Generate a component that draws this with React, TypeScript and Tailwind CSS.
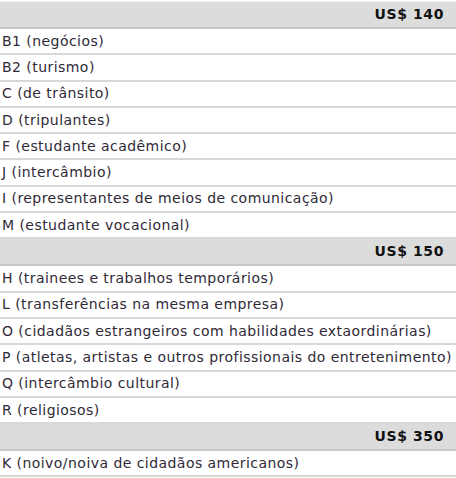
import React from "react";

const groups: { price: string; items: string[] }[] = [
  {
    price: "US$ 140",
    items: [
      "B1 (negócios)",
      "B2 (turismo)",
      "C (de trânsito)",
      "D (tripulantes)",
      "F (estudante acadêmico)",
      "J (intercâmbio)",
      "I (representantes de meios de comunicação)",
      "M (estudante vocacional)",
    ],
  },
  {
    price: "US$ 150",
    items: [
      "H (trainees e trabalhos temporários)",
      "L (transferências na mesma empresa)",
      "O (cidadãos estrangeiros com habilidades extaordinárias)",
      "P (atletas, artistas e outros profissionais do entretenimento)",
      "Q (intercâmbio cultural)",
      "R (religiosos)",
    ],
  },
  {
    price: "US$ 350",
    items: ["K (noivo/noiva de cidadãos americanos)"],
  },
];

export default function App() {
  return (
    <div
      className="w-[456px] h-[478px] bg-white pt-[1px] overflow-hidden text-[#302a38] text-[14px] tracking-[0.45px]"
      style={{ fontFamily: '"DejaVu Sans", Verdana, sans-serif' }}
    >
      <div className="border-t border-[#f0f0f0]">
        {groups.map((g) => (
          <div key={g.price}>
            <div className="h-[27px] bg-[#dcdcdc] border-b-2 border-[#c8c8c8] flex items-center justify-end pr-[12px] font-bold text-[#111] tracking-[0.6px]">
              {g.price}
            </div>
            {g.items.map((it) => (
              <div
                key={it}
                className="h-[26.3px] border-b-2 border-[#d8d8d8] flex items-center pl-[2px] whitespace-nowrap"
              >
                {it}
              </div>
            ))}
          </div>
        ))}
      </div>
    </div>
  );
}
